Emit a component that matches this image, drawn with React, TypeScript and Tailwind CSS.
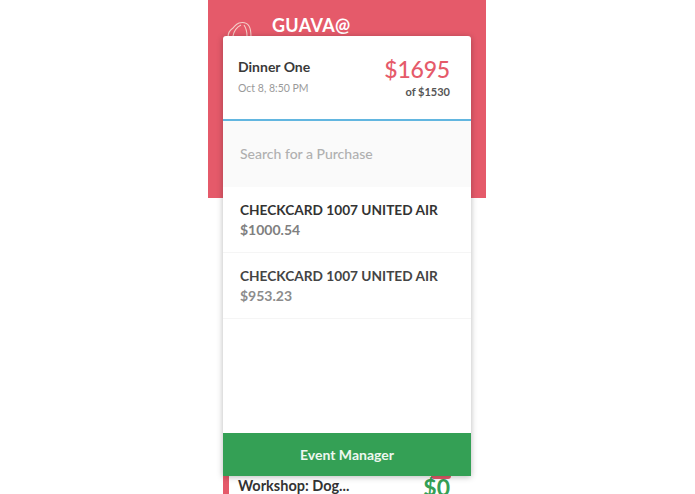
export default function App() {
  return (
    <div className="w-[695px] h-[494px] bg-white overflow-hidden flex justify-center font-['Lato','Noto_Sans',sans-serif]">
      <div className="relative w-[278px] h-[494px] ml-[-1px]">
        <div className="h-[198px] bg-[#e55a6a] pl-[64px] pt-[14px]">
          <div className="text-[18px] leading-[22px] font-bold text-white tracking-[0.3px]">GUAVA@</div>
        </div>
        <svg className="absolute left-[18px] top-[20px]" width="30" height="18" viewBox="0 0 30 18" fill="none" stroke="#f4cfc8" strokeWidth="1.1">
          <path d="M2 17C2 13 4 10 7 8c2-2 3-4 6-5 4-1 8 0 10 3 2 3 2 7 2 11" />
          <path d="M7 16c1-5 4-9 8-11M18 5c2 3 3 7 3 11" />
        </svg>
        <div className="absolute left-[15px] top-[476px] w-[248px] h-[18px] bg-white flex items-start">
          <div className="w-[6px] h-full bg-[#e55a6a]" />
          <div className="flex-1 flex justify-between pl-[9px] pr-[21px] relative">
            <span className="text-[14.5px] leading-[20px] font-bold text-[#333]">Workshop: Dog...</span>
            <div className="absolute right-[20px] top-0 w-[20px] h-[3px] rounded-b-full bg-[#e55a6a]" />
            <span className="relative text-[23px] leading-[24px] text-[#34a055] font-bold mt-[-1px]">$0</span>
          </div>
        </div>
        <div className="absolute left-[15px] top-[36px] w-[248px] h-[440px] bg-white rounded-t-[3px] shadow-[0_1px_6px_rgba(0,0,0,0.28)] flex flex-col">
          <div className="h-[85px] flex justify-between border-b-[2px] border-[#62b6e0] pl-[15px] pr-[21px] box-border">
            <div className="pt-[22px]">
              <div className="text-[14px] leading-[18px] font-bold text-[#3a3a3a]">Dinner One</div>
              <div className="text-[10.5px] leading-[14px] text-[#9a9a9a] mt-[5px]">Oct 8, 8:50 PM</div>
            </div>
            <div className="flex flex-col items-end pt-[18px]">
              <div className="text-[23px] leading-[30px] text-[#e55a6a] font-medium tracking-[-0.2px]">$1695</div>
              <div className="text-[11px] leading-[14px] font-bold text-[#555] mt-[1px]">of $1530</div>
            </div>
          </div>
          <div className="h-[66px] bg-[#fafafa] pl-[17px] pt-[24px]">
            <div className="text-[14px] leading-[18px] font-medium text-[#b0b0b0]">Search for a Purchase</div>
          </div>
          <div className="h-[66px] border-b border-[#f5f5f5] pl-[17px] pt-[13px]">
            <div className="text-[13.7px] leading-[20px] font-bold text-[#333]">CHECKCARD 1007 UNITED AIR</div>
            <div className="text-[14px] leading-[20px] font-bold text-[#808080]">$1000.54</div>
          </div>
          <div className="h-[66px] border-b border-[#f5f5f5] pl-[17px] pt-[13px]">
            <div className="text-[13.7px] leading-[20px] font-bold text-[#444]">CHECKCARD 1007 UNITED AIR</div>
            <div className="text-[14px] leading-[20px] font-bold text-[#8c8c8c]">$953.23</div>
          </div>
          <div className="flex-1" />
          <div className="h-[43px] bg-[#34a055] flex items-center justify-center text-[14px] font-bold text-[#eef7f0]">Event Manager</div>
        </div>
      </div>
    </div>
  );
}
